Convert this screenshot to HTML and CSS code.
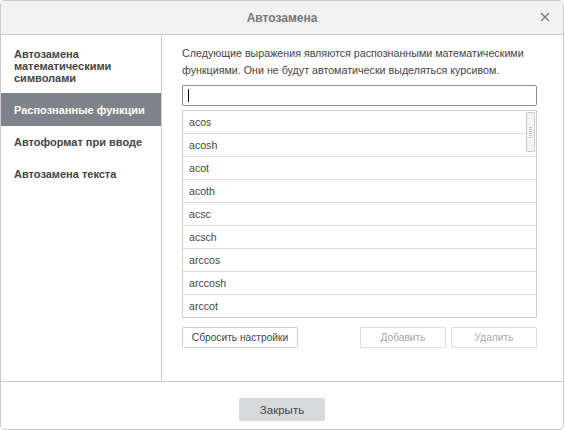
FILE: index.html
```
<!DOCTYPE html>
<html lang="ru">
<head>
  <meta charset="UTF-8">
  <title>Автозамена</title>
  <link rel="stylesheet" href="styles.css">
</head>
<body>
  <div class="dialog">
    <div class="header">
      <span class="title">Автозамена</span>
      <span class="close">
        <svg width="10" height="10" viewBox="0 0 10 10"><path d="M1 1 L9 9 M9 1 L1 9" stroke="#7a7a7a" stroke-width="1.4"/></svg>
      </span>
    </div>

    <div class="body">
      <div class="sidebar">
        <div class="menu-item first">Автозамена математическими символами</div>
        <div class="menu-item active">Распознанные функции</div>
        <div class="menu-item">Автоформат при вводе</div>
        <div class="menu-item">Автозамена текста</div>
      </div>

      <div class="content">
        <p class="description">Следующие выражения являются распознанными математическими функциями. Они не будут автоматически выделяться курсивом.</p>
        <div class="input"><span class="caret"></span></div>
        <div class="list">
          <div class="row">acos</div>
          <div class="row">acosh</div>
          <div class="row">acot</div>
          <div class="row">acoth</div>
          <div class="row">acsc</div>
          <div class="row">acsch</div>
          <div class="row">arccos</div>
          <div class="row">arccosh</div>
          <div class="row last">arccot</div>
          <div class="scroll-thumb"><span class="grip"></span></div>
        </div>
        <div class="actions">
          <button class="btn reset">Сбросить настройки</button>
          <div class="spacer"></div>
          <button class="btn disabled">Добавить</button>
          <button class="btn disabled">Удалить</button>
        </div>
      </div>
    </div>

    <div class="footer">
      <button class="btn-close">Закрыть</button>
    </div>
  </div>
</body>
</html>
```

FILE: styles.css
```
body, html {
  margin: 0;
  padding: 0;
  background: #fff;
  font-family: "Liberation Sans", Arial, sans-serif;
  color: #444;
}

.dialog {
  width: 564px;
  height: 430px;
  box-sizing: border-box;
  border: 1px solid #cbcbcb;
  border-radius: 5px;
  display: flex;
  flex-direction: column;
  overflow: hidden;
}

.header {
  height: 33px;
  flex: none;
  background: #f1f1f1;
  border-bottom: 1px solid #cbcbcb;
  display: flex;
  align-items: center;
  justify-content: center;
  position: relative;
}

.title {
  font-size: 12px;
  font-weight: bold;
  color: #777;
}

.close {
  position: absolute;
  right: 13px;
  top: 11px;
  width: 10px;
  height: 10px;
  display: flex;
}

.body {
  flex: 1;
  display: flex;
  border-bottom: 1px solid #cbcbcb;
}

.sidebar {
  width: 160px;
  flex: none;
  border-right: 1px solid #cbcbcb;
}

.menu-item {
  font-size: 11px;
  font-weight: bold;
  line-height: 12px;
  padding: 10px 13px 10px 13px;
  height: 12px;
  color: #444;
}

.menu-item.first {
  height: auto;
  padding-top: 13px;
  padding-bottom: 9px;
}

.menu-item.active {
  background: #7d8389;
  color: #fff;
  padding-top: 11px;
}

.content {
  flex: 1;
  padding: 10px 26px 0 20px;
  display: flex;
  flex-direction: column;
}

.description {
  margin: 0 0 6px 0;
  font-size: 10.7px;
  line-height: 17px;
  color: #444;
}

.input {
  height: 19px;
  border: 1px solid #8c8c8c;
  border-radius: 2px;
  display: flex;
  align-items: center;
  padding-left: 5px;
}

.caret {
  width: 1px;
  height: 13px;
  background: #000;
}

.list {
  margin-top: 4px;
  border: 1px solid #cfcfcf;
  position: relative;
}

.row {
  height: 22px;
  line-height: 22px;
  border-bottom: 1px solid #dcdcdc;
  padding-left: 6px;
  font-size: 10.6px;
  color: #444;
}

.row.last {
  border-bottom: none;
}

.scroll-thumb {
  position: absolute;
  right: 1px;
  top: 1px;
  width: 7px;
  height: 38px;
  border: 1px solid #cbcbcb;
  border-radius: 2px;
  background: #f3f3f3;
  display: flex;
  align-items: center;
  justify-content: center;
}

.grip {
  width: 3px;
  height: 11px;
  background: repeating-linear-gradient(#c4c4c4 0 1px, transparent 1px 2px);
}

.actions {
  display: flex;
  margin-top: 9px;
  gap: 5px;
}

.spacer {
  flex: 1;
}

.btn {
  height: 21px;
  padding: 0;
  border: 1px solid #cfcfcf;
  background: #fff;
  font-family: "Liberation Sans", Arial, sans-serif;
  font-size: 10.2px;
  color: #444;
  border-radius: 1px;
}

.btn.reset {
  width: 116px;
}

.btn.disabled {
  width: 86px;
  color: #a9a9a9;
  border-color: #dedede;
}

.footer {
  height: 47px;
  flex: none;
  display: flex;
  justify-content: center;
  padding-top: 16px;
  box-sizing: border-box;
}

.btn-close {
  width: 86px;
  height: 23px;
  border: none;
  background: #d8d9db;
  font-family: "Liberation Sans", Arial, sans-serif;
  font-size: 11.5px;
  color: #444;
  border-radius: 1px;
}
```
